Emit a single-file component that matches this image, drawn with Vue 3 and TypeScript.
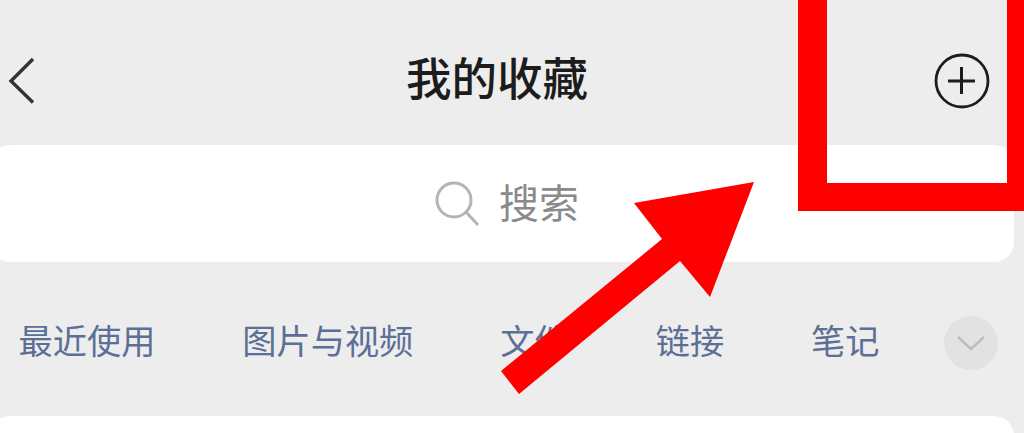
<template>
  <div class="page">
    <header class="nav">
      <button class="icon-btn back" type="button" aria-label="返回">
        <svg viewBox="0 0 30 50" width="30" height="50">
          <path d="M25 3 L3 25 L25 46.5" fill="none" stroke="#333" stroke-width="3.4" />
        </svg>
      </button>
      <h1 class="title">我的收藏</h1>
      <button class="icon-btn" type="button" aria-label="添加">
        <svg viewBox="0 0 56 56" width="56" height="56">
          <circle cx="28" cy="28" r="26" fill="none" stroke="#1c1c1c" stroke-width="2.8" />
          <path d="M14 28 H41 M27.5 14 V41" fill="none" stroke="#1c1c1c" stroke-width="3" />
        </svg>
      </button>
    </header>

    <div class="search">
      <svg viewBox="0 0 48 48" width="48" height="48">
        <circle cx="21" cy="20" r="17" fill="none" stroke="#b4b4b4" stroke-width="3" />
        <path d="M33 32 L45 45" fill="none" stroke="#b4b4b4" stroke-width="3" />
      </svg>
      <span class="search-text">搜索</span>
    </div>

    <nav class="tabs">
      <a v-for="tab in tabs" :key="tab" class="tab">{{ tab }}</a>
      <span class="more">
        <svg viewBox="0 0 30 16" width="30" height="16">
          <path d="M2 2 L15 14 L28 2" fill="none" stroke="#bdbdbd" stroke-width="2.4" />
        </svg>
      </span>
    </nav>

    <div class="card"></div>

    <!-- red annotation drawn over the screenshot -->
    <svg class="markup" viewBox="0 0 1024 433" width="1024" height="433">
      <path d="M798 0 H827 V183 H1007 V0 H1024 V211 H798 Z" fill="#fe0000" />
      <path d="M754 182 L710 297 L680 261 L519 394 L501 371 L662 239 L634 203 Z" fill="#fe0000" />
    </svg>
  </div>
</template>

<script setup lang="ts">
const tabs: string[] = ['最近使用', '图片与视频', '文件', '链接', '笔记']
</script>

<style scoped>
.page {
  position: relative;
  width: 1024px;
  height: 433px;
  overflow: hidden;
  background: #ededed;
  font-family: "Liberation Sans", "Noto Sans CJK SC", sans-serif;
}

.nav {
  display: flex;
  align-items: center;
  justify-content: space-between;
  height: 145px;
  padding: 16px 34px 0 8px;
  box-sizing: border-box;
}

.icon-btn {
  display: flex;
  padding: 0;
  border: none;
  background: none;
}

.back {
  width: 52px;
}

.title {
  margin: 0;
  font-size: 45.5px;
  font-weight: 500;
  line-height: 1;
  color: #1c1c1c;
}

.search {
  display: flex;
  align-items: center;
  justify-content: center;
  gap: 18px;
  width: 1024px;
  height: 117px;
  margin-left: -10px;
  border-radius: 20px;
  background: #fff;
}

.search svg {
  margin-left: 8px;
}

.search-text {
  font-size: 40px;
  line-height: 1;
  color: #8a8a8a;
}

.tabs {
  display: flex;
  align-items: center;
  gap: 87px;
  height: 148px;
  padding-top: 6px;
  padding-left: 18.6px;
}

.tab {
  font-size: 34.2px;
  line-height: 1;
  color: #5c6f97;
}

.more {
  display: flex;
  align-items: center;
  justify-content: center;
  width: 54px;
  height: 54px;
  margin-top: 2px;
  margin-left: -22px;
  border-radius: 50%;
  background: #e2e2e2;
}

.card {
  width: 1024px;
  height: 60px;
  margin-left: -10px;
  border-radius: 20px;
  background: #fff;
}

.markup {
  position: absolute;
  top: 0;
  left: 0;
}
</style>
